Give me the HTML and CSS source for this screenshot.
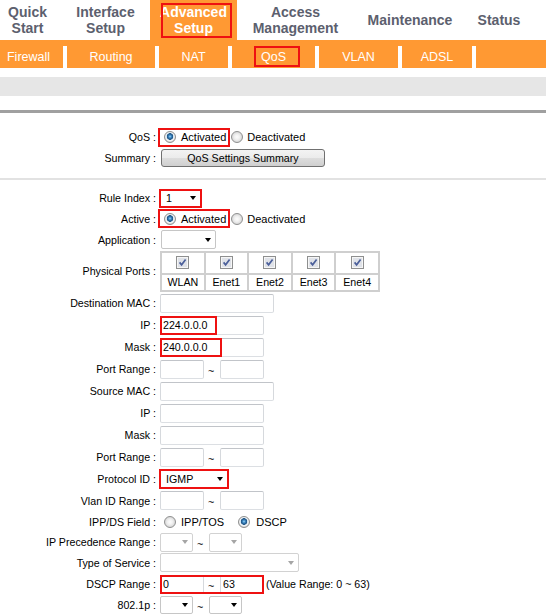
FILE: index.html
```html
<!DOCTYPE html>
<html>
<head>
<meta charset="utf-8">
<title>QoS</title>
<link rel="stylesheet" href="styles.css">
</head>
<body>
<div class="topnav">
  <div class="tab t1">Quick<br>Start</div>
  <div class="tab t2">Interface<br>Setup</div>
  <div class="tab t3">Advanced<br>Setup<span class="mark mk-adv"></span></div>
  <div class="tab t4">Access<br>Management</div>
  <div class="tab t5">Maintenance</div>
  <div class="tab t6">Status</div>
</div>
<div class="subnav">
  <div class="sub s-fw">Firewall</div>
  <div class="sub s-rt">Routing</div>
  <div class="sub s-nat">NAT</div>
  <div class="sub s-qos">QoS<span class="mark mk-qos"></span></div>
  <div class="sub s-vlan">VLAN</div>
  <div class="sub s-adsl">ADSL</div>
  <div class="sub s-end"></div>
</div>
<div class="strip"></div>
<div class="rule"></div>

<div class="s1">
  <div class="row h22">
    <div class="lbl">QoS :</div>
    <div class="val">
      <span class="rbox"><span class="radio on"></span><span class="rtext">Activated</span></span>
      <span class="radio r-after"></span><span class="rtext">Deactivated</span>
    </div>
  </div>
  <div class="row h20">
    <div class="lbl">Summary :</div>
    <div class="val"><button class="btn" type="button">QoS Settings Summary</button></div>
  </div>
</div>
<div class="divider"></div>
<div class="s2">
  <div class="row h20">
    <div class="lbl">Rule Index :</div>
    <div class="val"><div class="sel marked w43"><span>1</span><span class="arr"></span></div></div>
  </div>
  <div class="row h21">
    <div class="lbl">Active :</div>
    <div class="val">
      <span class="rbox"><span class="radio on"></span><span class="rtext">Activated</span></span>
      <span class="radio r-after"></span><span class="rtext">Deactivated</span>
    </div>
  </div>
  <div class="row h21">
    <div class="lbl">Application :</div>
    <div class="val"><div class="sel w55 ml1"><span></span><span class="arr"></span></div></div>
  </div>
  <div class="row h42">
    <div class="lbl">Physical Ports :</div>
    <div class="val">
      <div class="ports">
        <div class="pc"><svg class="cb" width="13" height="13" viewBox="0 0 13 13"><rect x="0.5" y="0.5" width="12" height="12" fill="#f6f6f6" stroke="#8e8f8f"/><rect x="2" y="2" width="9" height="9" fill="#dfe2e8"/><path d="M3.6 6.4 L5.6 8.8 L9.6 3.6" fill="none" stroke="#4b5f9a" stroke-width="1.7"/></svg></div>
        <div class="pc"><svg class="cb" width="13" height="13" viewBox="0 0 13 13"><rect x="0.5" y="0.5" width="12" height="12" fill="#f6f6f6" stroke="#8e8f8f"/><rect x="2" y="2" width="9" height="9" fill="#dfe2e8"/><path d="M3.6 6.4 L5.6 8.8 L9.6 3.6" fill="none" stroke="#4b5f9a" stroke-width="1.7"/></svg></div>
        <div class="pc"><svg class="cb" width="13" height="13" viewBox="0 0 13 13"><rect x="0.5" y="0.5" width="12" height="12" fill="#f6f6f6" stroke="#8e8f8f"/><rect x="2" y="2" width="9" height="9" fill="#dfe2e8"/><path d="M3.6 6.4 L5.6 8.8 L9.6 3.6" fill="none" stroke="#4b5f9a" stroke-width="1.7"/></svg></div>
        <div class="pc"><svg class="cb" width="13" height="13" viewBox="0 0 13 13"><rect x="0.5" y="0.5" width="12" height="12" fill="#f6f6f6" stroke="#8e8f8f"/><rect x="2" y="2" width="9" height="9" fill="#dfe2e8"/><path d="M3.6 6.4 L5.6 8.8 L9.6 3.6" fill="none" stroke="#4b5f9a" stroke-width="1.7"/></svg></div>
        <div class="pc"><svg class="cb" width="13" height="13" viewBox="0 0 13 13"><rect x="0.5" y="0.5" width="12" height="12" fill="#f6f6f6" stroke="#8e8f8f"/><rect x="2" y="2" width="9" height="9" fill="#dfe2e8"/><path d="M3.6 6.4 L5.6 8.8 L9.6 3.6" fill="none" stroke="#4b5f9a" stroke-width="1.7"/></svg></div>
        <div class="pc">WLAN</div>
        <div class="pc">Enet1</div>
        <div class="pc">Enet2</div>
        <div class="pc">Enet3</div>
        <div class="pc">Enet4</div>
      </div>
    </div>
  </div>
  <div class="row h22">
    <div class="lbl">Destination MAC :</div>
    <div class="val"><input class="txt w114" type="text" value=""></div>
  </div>
  <div class="row h22">
    <div class="lbl">IP :</div>
    <div class="val"><span class="field"><input class="txt w104" type="text" value="224.0.0.0"><span class="mark mk-ip"></span></span></div>
  </div>
  <div class="row h22">
    <div class="lbl">Mask :</div>
    <div class="val"><span class="field"><input class="txt w104" type="text" value="240.0.0.0"><span class="mark mk-mask"></span></span></div>
  </div>
  <div class="row h22">
    <div class="lbl">Port Range :</div>
    <div class="val"><input class="txt w44" type="text" value=""><span class="tilde">~</span><input class="txt w44" type="text" value=""></div>
  </div>
  <div class="row h22">
    <div class="lbl">Source MAC :</div>
    <div class="val"><input class="txt w114" type="text" value=""></div>
  </div>
  <div class="row h22">
    <div class="lbl">IP :</div>
    <div class="val"><input class="txt w104" type="text" value=""></div>
  </div>
  <div class="row h22">
    <div class="lbl">Mask :</div>
    <div class="val"><input class="txt w104" type="text" value=""></div>
  </div>
  <div class="row h22">
    <div class="lbl">Port Range :</div>
    <div class="val"><input class="txt w44" type="text" value=""><span class="tilde">~</span><input class="txt w44" type="text" value=""></div>
  </div>
  <div class="row h22">
    <div class="lbl">Protocol ID :</div>
    <div class="val"><div class="sel marked w70 h20s"><span>IGMP</span><span class="arr"></span></div></div>
  </div>
  <div class="row h21">
    <div class="lbl">Vlan ID Range :</div>
    <div class="val"><input class="txt w44" type="text" value=""><span class="tilde">~</span><input class="txt w44" type="text" value=""></div>
  </div>
  <div class="row h21">
    <div class="lbl">IPP/DS Field :</div>
    <div class="val">
      <span class="radio r-ipp"></span><span class="rtext t-ipp">IPP/TOS</span>
      <span class="radio on r-dscp"></span><span class="rtext t-dscp">DSCP</span>
    </div>
  </div>
  <div class="row h20">
    <div class="lbl">IP Precedence Range :</div>
    <div class="val"><div class="sel dis w33"><span></span><span class="arr"></span></div><span class="tilde">~</span><div class="sel dis w33"><span></span><span class="arr"></span></div></div>
  </div>
  <div class="row h21">
    <div class="lbl">Type of Service :</div>
    <div class="val"><div class="sel dis w139"><span></span><span class="arr"></span></div></div>
  </div>
  <div class="row h22">
    <div class="lbl">DSCP Range :</div>
    <div class="val">
      <span class="grp"><input class="txt w44" type="text" value="0"><span class="tilde">~</span><input class="txt w44" type="text" value="63"><span class="mark mk-all"></span></span>
      <span class="hint">(Value Range: 0 ~ 63)</span>
    </div>
  </div>
  <div class="row h20">
    <div class="lbl">802.1p :</div>
    <div class="val"><div class="sel w33 h18s"><span></span><span class="arr"></span></div><span class="tilde">~</span><div class="sel w33 h18s"><span></span><span class="arr"></span></div></div>
  </div>
</div>
</body>
</html>
```

FILE: styles.css
```css
* { box-sizing: border-box; }
html, body { margin: 0; padding: 0; background: #fff; }
body {
  font-family: "Liberation Sans", Arial, sans-serif;
  color: #000;
  overflow: hidden;
}

/* top navigation */
.topnav { display: flex; height: 40px; }
.tab {
  display: flex;
  align-items: center;
  justify-content: center;
  text-align: center;
  font-weight: bold;
  font-size: 14px;
  line-height: 16px;
  color: #5c606e;
  flex: none;
}
.t1 { width: 55px; }
.t2 { width: 95px; padding-left: 6px; }
.t3 { width: 87px; background: #ff9933; color: #fff; position: relative; }
.t4 { width: 117px; }
.t5 { width: 112px; }
.t6 { width: 66px; }

.mark {
  position: absolute;
  border: 2px solid #ee1111;
  pointer-events: none;
}
.mk-adv { left: 11px; top: 3px; width: 71px; height: 35px; }

/* sub navigation */
.subnav {
  display: flex;
  height: 28px;
  padding-top: 6px;
  background: #ff9933;
}
.sub {
  flex: none;
  height: 22px;
  display: flex;
  align-items: center;
  justify-content: center;
  color: #fff;
  font-size: 12.5px;
  border-left: 4px solid #fff;
  position: relative;
}
.s-fw { width: 63px; border-left: 0; padding-right: 6px; }
.s-rt { width: 92px; }
.s-nat { width: 73px; }
.s-qos { width: 87px; }
.s-vlan { width: 83px; }
.s-adsl { width: 74px; }
.s-end { width: 74px; }
.mk-qos { left: 22px; top: 0; width: 46px; height: 21px; }

.strip { height: 19px; margin-top: 9px; background: #e6e6e6; }
.rule { height: 3px; margin-top: 14px; background: #a0a0a0; }

/* form */
.s1 { padding: 13px 0 10px; }
.divider { height: 2px; background: #e2e2e2; }
.s2 { padding-top: 8px; }

.row {
  display: grid;
  grid-template-columns: 160px auto;
  align-items: center;
}
.h20 { height: 20px; }
.h21 { height: 21px; }
.h22 { height: 22px; }
.h42 { height: 42px; }

.lbl {
  text-align: right;
  padding-right: 4px;
  font-size: 10.67px;
  white-space: nowrap;
}
.val {
  display: flex;
  align-items: center;
  font-size: 10.67px;
}

/* radios */
.radio {
  flex: none;
  width: 12px;
  height: 12px;
  border-radius: 50%;
  border: 1px solid #8e8f8f;
  background: radial-gradient(circle, #fdfdfd 0, #f1f1f1 2.5px, #d9d9d9 5px);
}
.radio.on {
  background: radial-gradient(circle at 50% 45%, #9ed8f7 0, #3b86c2 1.4px, #1c4e7d 3px, #d3e6f3 3.5px, #f6f6f6 4.2px, #d2d2d2 5.5px);
}
.rtext { font-size: 11px; margin-left: 4px; white-space: nowrap; }
.rbox {
  display: flex;
  align-items: center;
  height: 19px;
  border: 2px solid #ee1111;
  margin-left: -2px;
  padding: 0 2px 0 4px;
}
.rbox .rtext { margin-left: 5px; }
.r-after { margin-left: 1px; }
.r-ipp { margin-left: 4px; }
.t-ipp { margin-left: 5px; }
.r-dscp { margin-left: 14px; }
.t-dscp { margin-left: 6px; }

/* button */
.btn {
  margin: 0 0 0 1px;
  padding: 0;
  width: 164px;
  height: 18px;
  border: 1px solid #707070;
  border-radius: 3px;
  background: linear-gradient(#f3f3f3, #ebebeb 50%, #dddddd 50%, #cfcfcf);
  font-family: "Liberation Sans", Arial, sans-serif;
  font-size: 10.67px;
  color: #000;
  line-height: 16px;
  text-align: center;
}

/* text inputs */
.txt {
  margin: 0;
  height: 19px;
  padding: 0 2px;
  border: 1px solid;
  border-color: #c1c4c9 #d6d9dd #dcdfe3 #d6d9dd;
  border-radius: 2px;
  background: #fff;
  font-family: "Liberation Sans", Arial, sans-serif;
  font-size: 10.67px;
  color: #000;
  outline: none;
}
.w44 { width: 44px; }
.w104 { width: 104px; }
.w114 { width: 114px; }

.field { position: relative; display: flex; }
.mk-ip { left: 0; top: 0; width: 57px; height: 19px; }
.mk-mask { left: 0; top: 0; width: 62px; height: 19px; }
.grp { position: relative; display: flex; align-items: center; }
.mk-all { left: 0; top: 0; right: 0; bottom: 0; }

.tilde {
  width: 16px;
  padding-left: 4px;
  padding-top: 3px;
  font-size: 10.67px;
}
.hint { margin-left: 2px; font-size: 10.67px; white-space: nowrap; }

/* drop-downs */
.sel {
  flex: none;
  display: flex;
  align-items: center;
  justify-content: space-between;
  height: 19px;
  border: 1px solid #c6c6c6;
  border-radius: 2px;
  padding: 0 4px 0 5px;
  background: #fff;
  font-size: 10.67px;
}
.sel .arr {
  width: 0;
  height: 0;
  border-left: 3.5px solid transparent;
  border-right: 3.5px solid transparent;
  border-top: 4px solid #000;
}
.sel.dis { border-color: #d2d2d2; }
.sel.dis .arr { border-top-color: #a5a5a5; }
.sel.marked {
  border: 2px solid #ee1111;
  border-radius: 0;
  margin-left: -1px;
}
.h20s { height: 20px; }
.h18s { height: 18px; }
.w33 { width: 33px; }
.w43 { width: 43px; }
.w55 { width: 55px; }
.w70 { width: 70px; }
.w139 { width: 139px; }
.ml1 { margin-left: 1px; }

/* physical ports */
.ports {
  width: 220px;
  display: grid;
  grid-template-columns: repeat(5, 1fr);
  grid-template-rows: 20px 15px;
  gap: 2px;
  padding: 2px;
  background: #cfcfcf;
}
.pc {
  background: #fff;
  display: flex;
  align-items: center;
  justify-content: center;
  font-size: 10.67px;
}
.cb { display: block; }
```
